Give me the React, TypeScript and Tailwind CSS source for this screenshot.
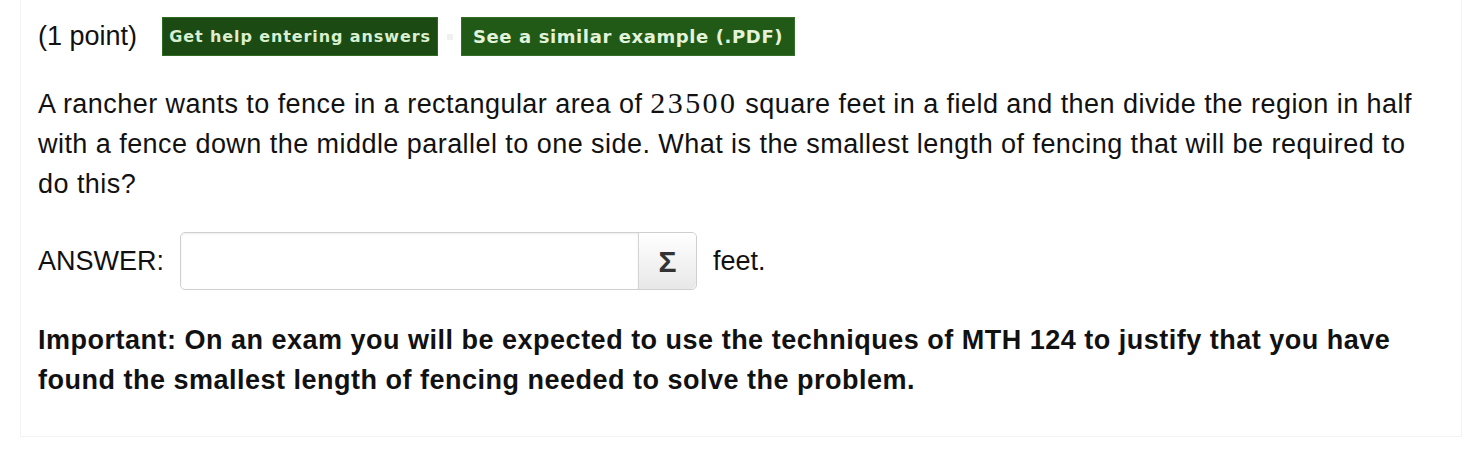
import React from 'react';

const sans = { fontFamily: '"Liberation Sans", Arial, sans-serif' };
const btnFont = { fontFamily: '"DejaVu Sans", Verdana, sans-serif' };

export default function App() {
  return (
    <div className="w-[1473px] h-[452px] bg-white" style={sans}>
      <div className="ml-[20px] w-[1442px] h-[437px] border-x border-b border-[#f3f3f3] px-[17px] pt-[17px] text-[27px] text-[#111]">
        {/* header row */}
        <div className="flex items-center h-[39px]">
          <span className="leading-[39px]">(1 point)</span>
          <span
            className="ml-[25px] h-[39px] w-[276px] flex items-center justify-center bg-[#1b4a12] border border-[#2f6a22] text-[#d9efcf] text-[16px] font-bold tracking-[0.9px]"
            style={btnFont}
          >
            Get help entering answers
          </span>
          <span className="ml-[9px] w-[6px] h-[6px] bg-[#f0f0f0]"></span>
          <span
            className="ml-[8px] h-[39px] w-[334px] flex items-center justify-center bg-[#215a16] border border-[#356f27] text-[#e3f3da] text-[18px] font-bold tracking-[0.6px]"
            style={btnFont}
          >
            See a similar example (.PDF)
          </span>
        </div>

        {/* question */}
        <p className="mt-[27px] leading-[40px] tracking-[0.45px]">
          A rancher wants to fence in a rectangular area of{' '}
          <span className="text-[30px] tracking-[2.4px]" style={{ fontFamily: '"Liberation Serif", serif' }}>23500</span> square feet in a field and then divide the region in half
          <br />
          with a fence down the middle parallel to one side. What is the smallest length of fencing that will be required to
          <br />
          do this?
        </p>

        {/* answer */}
        <div className="mt-[28px] flex items-center">
          <span>ANSWER:</span>
          <div className="ml-[16px] flex h-[58px] rounded-[5px] border border-[#cfcfcf]">
            <div className="w-[457px] bg-white rounded-l-[5px] shadow-[inset_0_1px_2px_rgba(0,0,0,0.08)]"></div>
            <div className="w-[58px] flex items-center justify-center border-l border-[#d4d4d4] bg-gradient-to-b from-[#ffffff] to-[#e8e8e8] rounded-r-[5px] text-[30px] font-bold text-[#333]">
              Σ
            </div>
          </div>
          <span className="ml-[16px]">feet.</span>
        </div>

        {/* note */}
        <p className="mt-[30px] leading-[40px] font-bold tracking-[0.5px]">
          Important: On an exam you will be expected to use the techniques of MTH 124 to justify that you have
          <br />
          found the smallest length of fencing needed to solve the problem.
        </p>
      </div>
    </div>
  );
}
